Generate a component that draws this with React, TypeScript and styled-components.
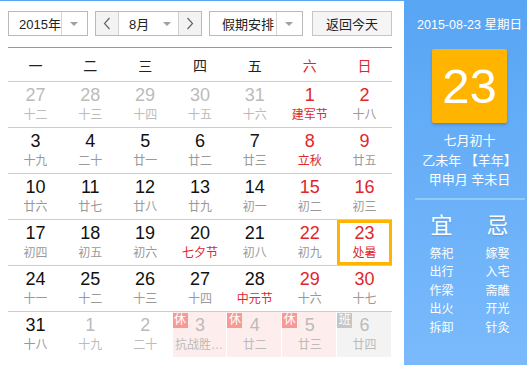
import React from "react";
import styled, { createGlobalStyle, css } from "styled-components";

const Global = createGlobalStyle`
  html, body { margin: 0; padding: 0; background: #fff; }
  body { font-family: "Liberation Sans", "Noto Sans CJK SC", sans-serif; }
`;

const RED = "#e0262c";

const Widget = styled.div`
  display: flex;
  width: 527px;
  height: 365px;
  overflow: hidden;
`;

const LeftPanel = styled.div`
  width: 404px;
  flex: none;
  box-sizing: border-box;
  padding: 0 12px 0 8px;
  border-top: 1px solid #5aa6f2;
`;

const Toolbar = styled.div`
  display: flex;
  align-items: center;
  height: 25px;
  margin: 10px 0 11px;
`;

const SelectBox = styled.div<{ $w: number; $ml?: number }>`
  display: flex;
  width: ${(p) => p.$w}px;
  height: 25px;
  margin-left: ${(p) => p.$ml ?? 0}px;
  box-sizing: border-box;
  border: 1px solid #b9b9b9;
  background: #fff;
  font-size: 13px;
  color: #222;
`;

const SelectLabel = styled.div<{ $pl: number }>`
  flex: 1;
  min-width: 0;
  display: flex;
  align-items: center;
  white-space: nowrap;
  padding-left: ${(p) => p.$pl}px;
`;

const ArrowBox = styled.div<{ $w: number; $divider?: boolean }>`
  width: ${(p) => p.$w}px;
  flex: none;
  display: flex;
  align-items: center;
  justify-content: center;
  ${(p) => p.$divider && css`border-left: 1px solid #d6d6d6;`}
`;

const Caret = styled.span`
  width: 0;
  height: 0;
  border-left: 4px solid transparent;
  border-right: 4px solid transparent;
  border-top: 4px solid #a0a0a0;
`;

const MonthGroup = styled.div`
  display: flex;
  height: 25px;
  margin-left: 7px;
  box-sizing: border-box;
  border: 1px solid #b9b9b9;
`;

const NavButton = styled.div<{ $side: "l" | "r" }>`
  width: 22px;
  display: flex;
  align-items: center;
  justify-content: center;
  background: #f3f3f3;
  ${(p) => (p.$side === "l" ? css`border-right: 1px solid #cfcfcf;` : css`border-left: 1px solid #cfcfcf;`)}
`;

const MonthSelect = styled.div`
  display: flex;
  width: 59px;
  background: #fff;
  font-size: 13px;
  color: #222;
`;

const TodayButton = styled.div`
  width: 81px;
  height: 25px;
  margin-left: 9px;
  box-sizing: border-box;
  border: 1px solid #c6c6c6;
  background: #f5f5f5;
  display: flex;
  align-items: center;
  justify-content: center;
  font-size: 13px;
  color: #222;
`;

const WeekHeader = styled.div`
  display: grid;
  grid-template-columns: repeat(7, 1fr);
  height: 33px;
  border-top: 1px solid #5aa6f2;
  border-bottom: 1px solid #cccccc;
`;

const WeekDay = styled.div<{ $red: boolean }>`
  display: flex;
  align-items: center;
  justify-content: center;
  font-size: 14px;
  color: ${(p) => (p.$red ? RED : "#222")};
`;

const Row = styled.div<{ $last: boolean }>`
  display: grid;
  grid-template-columns: repeat(7, 1fr);
  height: 45px;
  ${(p) => !p.$last && css`border-bottom: 1px solid #cccccc;`}
`;

type Kind = "rest" | "work" | undefined;

const Cell = styled.div<{ $bg: Kind; $sel: boolean }>`
  position: relative;
  display: flex;
  flex-direction: column;
  align-items: center;
  padding-top: 2px;
  min-width: 0;
  overflow: hidden;
  background: ${(p) => (p.$bg === "rest" ? "#fdeeed" : p.$bg === "work" ? "#f3f3f3" : "transparent")};
  box-shadow: ${(p) =>
    p.$sel ? "inset 0 0 0 3px #ffb400" : p.$bg ? "inset -1px 0 0 #fff" : "none"};
`;

const DayNum = styled.div<{ $color: string }>`
  font-size: 18px;
  line-height: 22px;
  color: ${(p) => p.$color};
`;

const Lunar = styled.div<{ $color: string }>`
  font-size: 12px;
  line-height: 18px;
  color: ${(p) => p.$color};
  max-width: 50px;
  white-space: nowrap;
  overflow: hidden;
  text-overflow: ellipsis;
`;

const Badge = styled.span<{ $kind: "rest" | "work" }>`
  position: absolute;
  left: 0;
  top: 1px;
  width: 15px;
  height: 15px;
  font-size: 12px;
  line-height: 15px;
  text-align: center;
  color: #fff;
  background: ${(p) => (p.$kind === "rest" ? "#f69b94" : "#c6c6c6")};
`;

const RightPanel = styled.div`
  flex: 1;
  box-sizing: border-box;
  padding: 17px 0 0 8px;
  background: linear-gradient(#58a5f4, #7abafc);
  color: #fff;
  display: flex;
  flex-direction: column;
  align-items: center;
`;

const DateLine = styled.div`
  font-size: 12.5px;
  line-height: 16px;
  white-space: nowrap;
`;

const BigDay = styled.div`
  width: 75px;
  height: 74px;
  margin-top: 16px;
  background: #ffb400;
  border-radius: 2px;
  box-shadow: 0 2px 3px rgba(0, 0, 0, 0.18);
  display: flex;
  align-items: center;
  justify-content: center;
  font-size: 49px;
  font-family: "Liberation Sans", Arial, sans-serif;
`;

const InfoBlock = styled.div`
  margin-top: 8px;
  font-size: 13px;
  line-height: 19.5px;
  text-align: center;
  white-space: nowrap;
`;

const Divider = styled.div`
  width: 110px;
  height: 2px;
  margin-top: 8px;
  background: rgba(255, 255, 255, 0.3);
`;

const YiJi = styled.div`
  display: flex;
  width: 112px;
  margin-top: 13px;
`;

const YiJiCol = styled.div`
  flex: 1;
  display: flex;
  flex-direction: column;
  align-items: center;
`;

const YiJiTitle = styled.div`
  font-size: 22px;
  line-height: 26px;
  margin-bottom: 6px;
  text-shadow: 0 1px 2px rgba(0, 0, 0, 0.15);
`;

const YiJiItem = styled.div`
  font-size: 12px;
  line-height: 18.5px;
`;

const Chevron = ({ dir }: { dir: "l" | "r" }) => (
  <svg width="8" height="13" viewBox="0 0 8 13">
    <polyline
      points={dir === "l" ? "6.5,1 1.5,6.5 6.5,12" : "1.5,1 6.5,6.5 1.5,12"}
      fill="none"
      stroke="#666"
      strokeWidth="1.2"
    />
  </svg>
);

type Day = {
  d: number;
  l: string;
  other?: boolean;
  fest?: boolean;
  bg?: Kind;
  sel?: boolean;
};

const weeks: Day[][] = [
  [
    { d: 27, l: "十二", other: true },
    { d: 28, l: "十三", other: true },
    { d: 29, l: "十四", other: true },
    { d: 30, l: "十五", other: true },
    { d: 31, l: "十六", other: true },
    { d: 1, l: "建军节", fest: true },
    { d: 2, l: "十八" },
  ],
  [
    { d: 3, l: "十九" },
    { d: 4, l: "二十" },
    { d: 5, l: "廿一" },
    { d: 6, l: "廿二" },
    { d: 7, l: "廿三" },
    { d: 8, l: "立秋", fest: true },
    { d: 9, l: "廿五" },
  ],
  [
    { d: 10, l: "廿六" },
    { d: 11, l: "廿七" },
    { d: 12, l: "廿八" },
    { d: 13, l: "廿九" },
    { d: 14, l: "初一" },
    { d: 15, l: "初二" },
    { d: 16, l: "初三" },
  ],
  [
    { d: 17, l: "初四" },
    { d: 18, l: "初五" },
    { d: 19, l: "初六" },
    { d: 20, l: "七夕节", fest: true },
    { d: 21, l: "初八" },
    { d: 22, l: "初九" },
    { d: 23, l: "处暑", fest: true, sel: true },
  ],
  [
    { d: 24, l: "十一" },
    { d: 25, l: "十二" },
    { d: 26, l: "十三" },
    { d: 27, l: "十四" },
    { d: 28, l: "中元节", fest: true },
    { d: 29, l: "十六" },
    { d: 30, l: "十七" },
  ],
  [
    { d: 31, l: "十八" },
    { d: 1, l: "十九", other: true },
    { d: 2, l: "二十", other: true },
    { d: 3, l: "抗战胜利纪念日", other: true, bg: "rest" },
    { d: 4, l: "廿二", other: true, bg: "rest" },
    { d: 5, l: "廿三", other: true, bg: "rest" },
    { d: 6, l: "廿四", other: true, bg: "work" },
  ],
];

const weekNames = ["一", "二", "三", "四", "五", "六", "日"];
const yi = ["祭祀", "出行", "作梁", "出火", "拆卸"];
const ji = ["嫁娶", "入宅", "斋醮", "开光", "针灸"];

export default function App() {
  return (
    <>
      <Global />
      <Widget>
        <LeftPanel>
          <Toolbar>
            <SelectBox $w={80}>
              <SelectLabel $pl={10}>2015年</SelectLabel>
              <ArrowBox $w={25} $divider>
                <Caret />
              </ArrowBox>
            </SelectBox>
            <MonthGroup>
              <NavButton $side="l">
                <Chevron dir="l" />
              </NavButton>
              <MonthSelect>
                <SelectLabel $pl={10}>8月</SelectLabel>
                <ArrowBox $w={22}>
                  <Caret />
                </ArrowBox>
              </MonthSelect>
              <NavButton $side="r">
                <Chevron dir="r" />
              </NavButton>
            </MonthGroup>
            <SelectBox $w={95} $ml={7}>
              <SelectLabel $pl={12}>假期安排</SelectLabel>
              <ArrowBox $w={25} $divider>
                <Caret />
              </ArrowBox>
            </SelectBox>
            <TodayButton>返回今天</TodayButton>
          </Toolbar>
          <WeekHeader>
            {weekNames.map((w, i) => (
              <WeekDay key={w} $red={i >= 5}>
                {w}
              </WeekDay>
            ))}
          </WeekHeader>
          {weeks.map((wk, ri) => (
            <Row key={ri} $last={ri === weeks.length - 1}>
              {wk.map((day, ci) => {
                const weekend = ci >= 5;
                const numColor = day.other ? "#bbbbbb" : weekend || day.sel ? RED : "#111";
                const lunarColor = day.other ? "#bbbbbb" : day.fest ? RED : "#999999";
                return (
                  <Cell key={ci} $bg={day.bg} $sel={!!day.sel}>
                    {day.bg && <Badge $kind={day.bg}>{day.bg === "rest" ? "休" : "班"}</Badge>}
                    <DayNum $color={numColor}>{day.d}</DayNum>
                    <Lunar $color={lunarColor}>{day.l}</Lunar>
                  </Cell>
                );
              })}
            </Row>
          ))}
        </LeftPanel>
        <RightPanel>
          <DateLine>2015-08-23 星期日</DateLine>
          <BigDay>23</BigDay>
          <InfoBlock>
            <div>七月初十</div>
            <div>乙未年 【羊年】</div>
            <div>甲申月 辛未日</div>
          </InfoBlock>
          <Divider />
          <YiJi>
            <YiJiCol>
              <YiJiTitle>宜</YiJiTitle>
              {yi.map((x) => (
                <YiJiItem key={x}>{x}</YiJiItem>
              ))}
            </YiJiCol>
            <YiJiCol>
              <YiJiTitle>忌</YiJiTitle>
              {ji.map((x) => (
                <YiJiItem key={x}>{x}</YiJiItem>
              ))}
            </YiJiCol>
          </YiJi>
        </RightPanel>
      </Widget>
    </>
  );
}
